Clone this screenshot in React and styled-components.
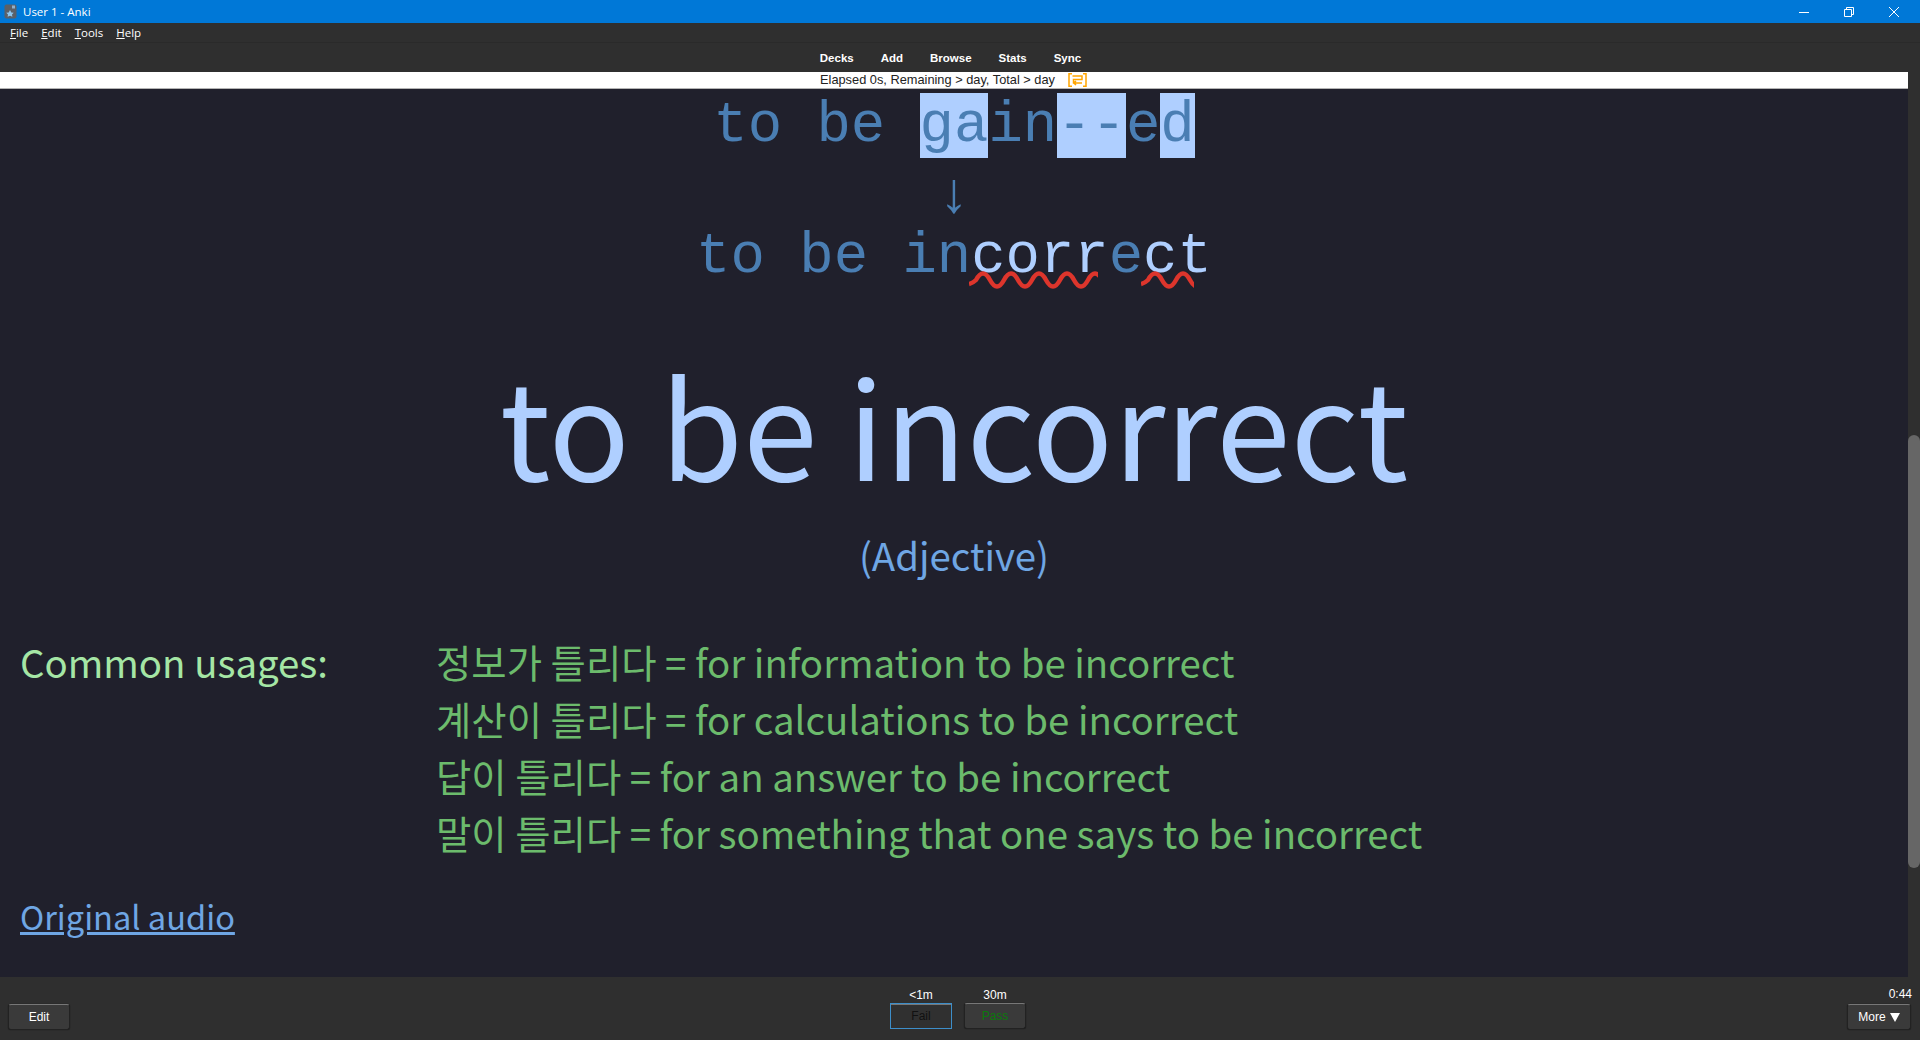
import React from 'react';
import styled, { createGlobalStyle } from 'styled-components';

const GlobalStyle = createGlobalStyle`
  html, body {
    margin: 0;
    padding: 0;
    overflow: hidden;
    background: #20202c;
  }
`;

const Window = styled.div`
  width: 1920px;
  height: 1040px;
  display: flex;
  flex-direction: column;
  font-family: 'Liberation Sans', Arial, sans-serif;
  background: #2f2f2f;
`;

const TitleBar = styled.div`
  height: 23px;
  flex: none;
  display: flex;
  align-items: center;
  background: #0078d7;
  color: #fff;
  font-size: 12px;
  padding-left: 4px;
  padding-right: 4px;
`;

const TitleText = styled.span`
  margin-left: 6px;
  font-family: 'Open Sans', sans-serif;
  font-size: 11.5px;
`;

const WindowControls = styled.div`
  margin-left: auto;
  display: flex;
  align-items: center;
`;

const WindowControl = styled.div`
  width: 45px;
  height: 23px;
  display: flex;
  align-items: center;
  justify-content: center;
`;

const MenuBar = styled.div`
  height: 19px;
  flex: none;
  display: flex;
  align-items: center;
  gap: 13px;
  padding-left: 10px;
  background: #2f2f2f;
  border-bottom: 1px solid #2a2a2a;
  color: #fff;
  font-family: 'Open Sans', sans-serif;
  font-size: 11.5px;
`;

const Mnemonic = styled.span`
  text-decoration: underline;
`;

const TopLinks = styled.div`
  height: 29px;
  flex: none;
  display: flex;
  justify-content: center;
  align-items: center;
  gap: 27px;
  padding-right: 19px;
  box-sizing: border-box;
  background: #2f2f2f;
  color: #fff;
  font-family: 'Liberation Sans', sans-serif;
  font-size: 11.5px;
  font-weight: bold;
`;

const Body = styled.div`
  flex: 1;
  min-height: 0;
  display: flex;
`;

const Main = styled.div`
  flex: 1;
  min-width: 0;
  display: flex;
  flex-direction: column;
  background: #20202c;
  overflow: hidden;
`;

const ProgressBar = styled.div`
  height: 17px;
  flex: none;
  display: flex;
  align-items: center;
  gap: 13px;
  padding-left: 820px;
  padding-bottom: 1px;
  box-sizing: border-box;
  background: #fff;
  border-bottom: 1px solid #b4b4b4;
  color: #222;
  font-size: 12.8px;
`;

const Card = styled.div`
  flex: 1;
  padding: 4px 20px 0;
  color: #afcfff;
  font-family: 'Noto Sans CJK KR', 'Noto Sans', sans-serif;
`;

const TypedLine = styled.div`
  font-family: 'Liberation Mono', monospace;
  font-size: 57.3px;
  line-height: 65px;
  text-align: center;
  white-space: pre;
  color: #4a7eb3;
`;

const Missing = styled.span`
  background: #afcfff;
`;

const Typo = styled.span`
  position: relative;
  color: #afcfff;
`;

const SquiggleLine = styled.svg`
  position: absolute;
  left: -2px;
  top: 47px;
  fill: none;
  stroke: #dd352c;
  stroke-width: 4.5;
`;

const Arrow = styled.div`
  font-family: 'Liberation Mono', monospace;
  font-size: 57.3px;
  line-height: 54px;
  padding-top: 12px;
  text-align: center;
  color: #4a7eb3;
`;

const Headword = styled.div`
  font-size: 134.4px;
  line-height: 180px;
  margin-top: 44px;
  text-align: center;
  color: #afcfff;
`;

const WordClass = styled.div`
  font-size: 38.4px;
  line-height: 58px;
  margin-top: 12px;
  text-align: center;
  color: #6fa6e4;
`;

const Usages = styled.div`
  display: grid;
  grid-template-columns: 416px 1fr;
  margin-top: 50px;
  font-size: 38.4px;
  line-height: 57px;
`;

const UsagesLabel = styled.div`
  color: #a5e6a5;
`;

const UsageLine = styled.div`
  color: #6cbb6c;
`;

const AudioLink = styled.a`
  display: inline-block;
  margin-top: 26px;
  font-size: 32.6px;
  line-height: 57px;
  color: #6fa6e4;
  text-decoration: underline;
`;

const Scrollbar = styled.div`
  width: 12px;
  flex: none;
  padding-top: 363px;
  box-sizing: border-box;
  background: #2f2f2f;
`;

const ScrollThumb = styled.div`
  height: 433px;
  background: #666;
  border-radius: 6px;
`;

const BottomBar = styled.div`
  height: 63px;
  flex: none;
  display: grid;
  grid-template-columns: 1fr auto 1fr;
  background: #2f2f2f;
  padding: 0 8px;
  box-sizing: border-box;
  color: #fff;
`;

const BottomLeft = styled.div`
  display: flex;
  align-items: flex-end;
  padding-bottom: 10px;
`;

const BottomCenter = styled.div`
  display: flex;
  gap: 12px;
  padding-top: 10px;
  margin-right: 4px;
`;

const BottomRight = styled.div`
  display: flex;
  flex-direction: column;
  align-items: flex-end;
  justify-content: flex-end;
  padding-bottom: 10px;
`;

const AnswerColumn = styled.div`
  display: flex;
  flex-direction: column;
  align-items: center;
`;

const Small = styled.div`
  font-size: 12px;
  line-height: 16px;
  color: #fff;
`;

const Timer = styled(Small)`
  margin-bottom: 2px;
`;

const ButtonBase = styled.div`
  width: ${(props) => props.$width || 62}px;
  height: 26px;
  display: flex;
  align-items: center;
  justify-content: center;
  gap: 4px;
  box-sizing: border-box;
  border-radius: 3px;
  font-size: 12px;
  background: #3a3a3a;
  border: 1px solid #222;
  border-top-color: #777;
  box-shadow: 0 0 1px #111;
  color: ${(props) => props.$color || '#fff'};
`;

const FocusButton = styled(ButtonBase)`
  border: 1px solid #3d8ec9;
  border-radius: 0;
  box-shadow: inset 0 1px 0 #777;
  background: #303030;
`;

const MoreButton = styled(ButtonBase)`
  margin-right: 1px;
`;

const Caret = styled.span`
  width: 0;
  height: 0;
  border-left: 5px solid transparent;
  border-right: 5px solid transparent;
  border-top: 9px solid #fff;
`;

const usages = [
  '정보가 틀리다 = for information to be incorrect',
  '계산이 틀리다 = for calculations to be incorrect',
  '답이 틀리다 = for an answer to be incorrect',
  '말이 틀리다 = for something that one says to be incorrect',
];

function AppIcon() {
  return (
    <svg width="13" height="15" viewBox="0 0 13 15">
      <rect x="0.5" y="0.5" width="12" height="14" rx="2" fill="#5b6068" />
      <rect x="8" y="1.5" width="3" height="3" fill="#8fb0cc" />
      <path d="M6 6l1.3 2.4 2.4.3-1.7 1.7.4 2.4L6 11.7l-2.4 1.1.4-2.4-1.7-1.7 2.4-.3z" fill="#8fc6ee" />
    </svg>
  );
}

// the red spell-check wave, clipped to the width it covers
function Squiggle({ width }) {
  const humps = ' t14 0'.repeat(12);
  return (
    <SquiggleLine width={width} height="18" viewBox={`0 0 ${width} 18`}>
      <path d={`M0 13 q4 -1 7 -4 q7 -13 14 0${humps}`} />
    </SquiggleLine>
  );
}

export default function App() {
  return (
    <Window>
      <GlobalStyle />
      <TitleBar>
        <AppIcon />
        <TitleText>User 1 - Anki</TitleText>
        <WindowControls>
          <WindowControl>
            <svg width="10" height="10" viewBox="0 0 10 10"><path d="M0 5.5h10" stroke="#fff" /></svg>
          </WindowControl>
          <WindowControl>
            <svg width="10" height="10" viewBox="0 0 10 10" fill="none" stroke="#fff">
              <path d="M.5 2.5h7v7h-7zM2.5 2.5v-2h7v7h-2" />
            </svg>
          </WindowControl>
          <WindowControl>
            <svg width="10" height="10" viewBox="0 0 10 10" stroke="#fff"><path d="M0 0l10 10M10 0L0 10" /></svg>
          </WindowControl>
        </WindowControls>
      </TitleBar>
      <MenuBar>
        <span><Mnemonic>F</Mnemonic>ile</span>
        <span><Mnemonic>E</Mnemonic>dit</span>
        <span><Mnemonic>T</Mnemonic>ools</span>
        <span><Mnemonic>H</Mnemonic>elp</span>
      </MenuBar>
      <TopLinks>
        <span>Decks</span>
        <span>Add</span>
        <span>Browse</span>
        <span>Stats</span>
        <span>Sync</span>
      </TopLinks>
      <Body>
        <Main>
          <ProgressBar>
            <span>Elapsed 0s, Remaining &gt; day, Total &gt; day</span>
            <svg width="19" height="14" viewBox="0 0 19 14" fill="none" stroke="#ffa500" strokeWidth="1.5">
              <path d="M4 .8H1v12.4h3M15 .8h3v12.4h-3M4.5 3h9.5v3.4H5.5v3.6H14M8 8l-2.2 2 2.2 2" />
            </svg>
          </ProgressBar>
          <Card>
            <TypedLine>
              to be <Missing>ga</Missing>in<Missing>--</Missing>e<Missing>d</Missing>
            </TypedLine>
            <Arrow>↓</Arrow>
            <TypedLine>
              to be in<Typo>corr<Squiggle width={129} /></Typo>e<Typo>ct<Squiggle width={53} /></Typo>
            </TypedLine>
            <Headword>to be incorrect</Headword>
            <WordClass>(Adjective)</WordClass>
            <Usages>
              <UsagesLabel>Common usages:</UsagesLabel>
              <div>
                {usages.map((line) => (
                  <UsageLine key={line}>{line}</UsageLine>
                ))}
              </div>
            </Usages>
            <AudioLink>Original audio</AudioLink>
          </Card>
        </Main>
        <Scrollbar>
          <ScrollThumb />
        </Scrollbar>
      </Body>
      <BottomBar>
        <BottomLeft>
          <ButtonBase>Edit</ButtonBase>
        </BottomLeft>
        <BottomCenter>
          <AnswerColumn>
            <Small>&lt;1m</Small>
            <FocusButton $color="#111">Fail</FocusButton>
          </AnswerColumn>
          <AnswerColumn>
            <Small>30m</Small>
            <ButtonBase $color="#0b7a0b">Pass</ButtonBase>
          </AnswerColumn>
        </BottomCenter>
        <BottomRight>
          <Timer>0:44</Timer>
          <MoreButton $width={64}>More <Caret /></MoreButton>
        </BottomRight>
      </BottomBar>
    </Window>
  );
}
